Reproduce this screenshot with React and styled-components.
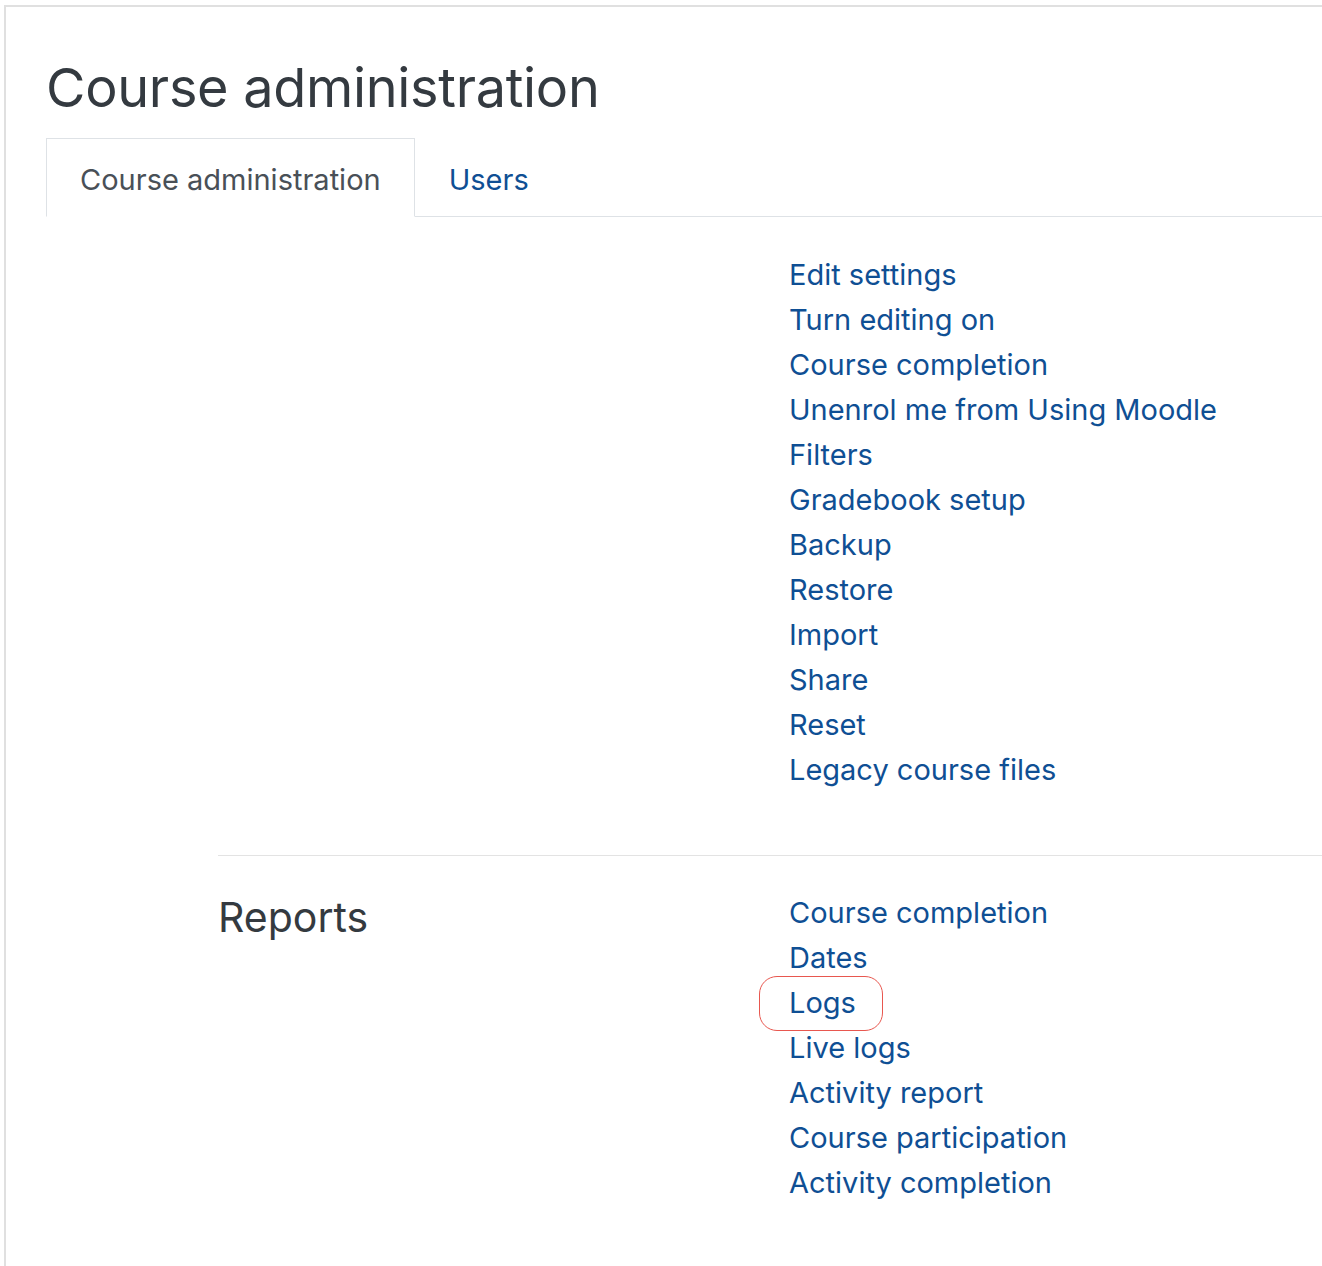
import React from "react";
import styled, { createGlobalStyle } from "styled-components";

const GlobalStyle = createGlobalStyle`
  html, body {
    margin: 0;
    padding: 0;
    background: #ffffff;
  }
  body {
    font-family: Inter, "Liberation Sans", Arial, sans-serif;
    color: #343a40;
    overflow: hidden;
  }
  * { box-sizing: border-box; }
`;

const Frame = styled.div`
  margin: 5px 0 0 4px;
  min-height: calc(100vh - 5px);
  border-top: 2px solid #e0e0e0;
  border-left: 2px solid #e0e0e0;
  padding: 0 0 40px 40px;
`;

const Title = styled.h2`
  margin: 0;
  padding-top: 47px;
  font-size: 54px;
  font-weight: 400;
  line-height: 67px;
  color: #343a40;
  letter-spacing: -0.3px;
`;

const TabBar = styled.div`
  display: flex;
  margin-top: 17px;
  border-bottom: 1px solid #dee2e6;
`;

const Tab = styled.a`
  display: block;
  padding: 18px 33px 14px;
  margin-bottom: -1px;
  font-size: 29px;
  line-height: 45px;
  text-decoration: none;
  cursor: pointer;
  border: 1px solid ${(p) => (p.$active ? "#dee2e6" : "transparent")};
  border-bottom-color: ${(p) => (p.$active ? "#ffffff" : "transparent")};
  background: ${(p) => (p.$active ? "#ffffff" : "transparent")};
  color: ${(p) => (p.$active ? "#495057" : "#0f4f94")};
`;

const Section = styled.section`
  display: grid;
  grid-template-columns: 571px 1fr;
  margin-left: 172px;
  padding: ${(p) => (p.$divided ? "34px 0 0" : "35px 0 63px")};
  border-top: ${(p) => (p.$divided ? "1px solid #e3e3e3" : "none")};
`;

const SectionLabel = styled.h3`
  margin: 0;
  font-size: 41px;
  font-weight: 400;
  line-height: 55px;
  color: #343a40;
`;

const LinkList = styled.ul`
  list-style: none;
  margin: 0;
  padding: 0;
`;

const LinkItem = styled.li`
  font-size: 29px;
  line-height: 45px;
`;

const Link = styled.a`
  color: #0f4f94;
  text-decoration: none;
  cursor: pointer;
  position: relative;
`;

const Marker = styled.span`
  position: absolute;
  top: -9px;
  bottom: -11px;
  left: -30px;
  right: -27px;
  border: 1.5px solid #e8574f;
  border-radius: 18px;
  pointer-events: none;
`;

const generalLinks = [
  "Edit settings",
  "Turn editing on",
  "Course completion",
  "Unenrol me from Using Moodle",
  "Filters",
  "Gradebook setup",
  "Backup",
  "Restore",
  "Import",
  "Share",
  "Reset",
  "Legacy course files",
];

const reportLinks = [
  "Course completion",
  "Dates",
  "Logs",
  "Live logs",
  "Activity report",
  "Course participation",
  "Activity completion",
];

export default function App() {
  return (
    <>
      <GlobalStyle />
      <Frame>
        <Title>Course administration</Title>
        <TabBar>
          <Tab $active>Course administration</Tab>
          <Tab>Users</Tab>
        </TabBar>
        <Section>
          <SectionLabel />
          <LinkList>
            {generalLinks.map((l) => (
              <LinkItem key={l}>
                <Link>{l}</Link>
              </LinkItem>
            ))}
          </LinkList>
        </Section>
        <Section $divided>
          <SectionLabel>Reports</SectionLabel>
          <LinkList>
            {reportLinks.map((l) => (
              <LinkItem key={l}>
                <Link>
                  {l}
                  {l === "Logs" && <Marker />}
                </Link>
              </LinkItem>
            ))}
          </LinkList>
        </Section>
      </Frame>
    </>
  );
}
